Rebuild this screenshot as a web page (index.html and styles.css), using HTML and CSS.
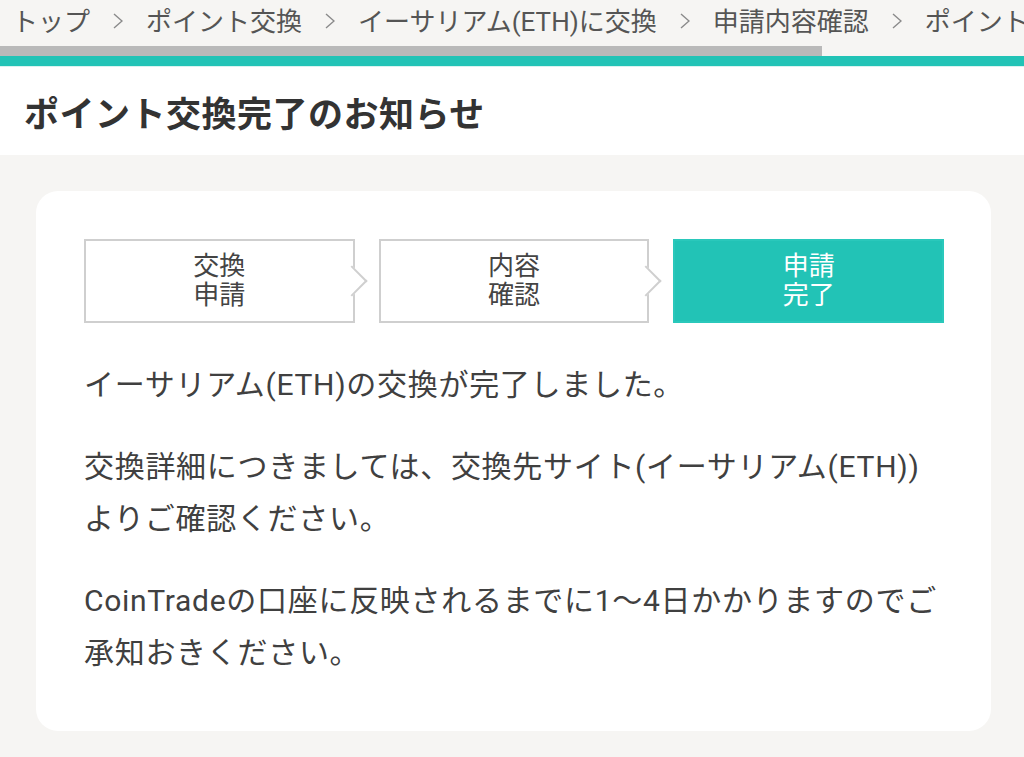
FILE: index.html
```html
<!DOCTYPE html>
<html lang="ja">
<head>
<meta charset="utf-8">
<title>ポイント交換完了のお知らせ</title>
<link rel="stylesheet" href="styles.css">
</head>
<body>
<nav class="crumbs">
  <div class="crumb-row">
    <span class="crumb">トップ</span>
    <svg class="sep" viewBox="0 0 10 16" width="10" height="16"><polyline points="1,1 9,8 1,15" fill="none" stroke="#8a8a8a" stroke-width="1.4"/></svg>
    <span class="crumb">ポイント交換</span>
    <svg class="sep" viewBox="0 0 10 16" width="10" height="16"><polyline points="1,1 9,8 1,15" fill="none" stroke="#8a8a8a" stroke-width="1.4"/></svg>
    <span class="crumb">イーサリアム(ETH)に交換</span>
    <svg class="sep" viewBox="0 0 10 16" width="10" height="16"><polyline points="1,1 9,8 1,15" fill="none" stroke="#8a8a8a" stroke-width="1.4"/></svg>
    <span class="crumb">申請内容確認</span>
    <svg class="sep" viewBox="0 0 10 16" width="10" height="16"><polyline points="1,1 9,8 1,15" fill="none" stroke="#8a8a8a" stroke-width="1.4"/></svg>
    <span class="crumb">ポイント交換完了のお知らせ</span>
  </div>
  <div class="scroll-track"><div class="scroll-thumb"></div></div>
</nav>
<div class="accent"></div>
<header class="page-head">
  <h1>ポイント交換完了のお知らせ</h1>
</header>
<main class="main">
  <section class="card">
    <ol class="steps">
      <li class="step arrow">交換<br>申請</li>
      <li class="step arrow">内容<br>確認</li>
      <li class="step current">申請<br>完了</li>
    </ol>
    <p class="msg">イーサリアム(ETH)の交換が完了しました。</p>
    <p class="msg">交換詳細につきましては、交換先サイト(イーサリアム(ETH))よりご確認ください。</p>
    <p class="msg">CoinTradeの口座に反映されるまでに1〜4日かかりますのでご承知おきください。</p>
  </section>
</main>
</body>
</html>
```

FILE: styles.css
```css
* { box-sizing: border-box; }
html, body { margin: 0; padding: 0; }
body {
  width: 1024px;
  height: 757px;
  overflow: hidden;
  background: #f6f5f3;
  font-family: Roboto, "Noto Sans CJK JP", sans-serif;
  color: #404040;
}
.crumbs {
  background: #f6f5f3;
}
.crumb-row {
  height: 46px;
  display: flex;
  align-items: center;
  white-space: nowrap;
  overflow: hidden;
  padding-left: 12px;
  padding-bottom: 7px;
  gap: 23px;
  font-size: 26px;
  color: #555;
}
.crumb { flex: none; }
.sep { flex: none; margin-top: 2px; }
.scroll-track {
  height: 10px;
  background: #f6f5f3;
}
.scroll-thumb {
  width: 822px;
  height: 10px;
  background: #b9b9b9;
}
.accent {
  height: 11px;
  background: #22c3b6;
  border-bottom: 1px solid #d8f3f0;
}
.page-head {
  background: #fff;
  height: 88px;
  display: flex;
  align-items: center;
  padding-left: 24px;
}
.page-head h1 {
  margin: 0;
  font-size: 35px;
  font-weight: 700;
  color: #333;
  letter-spacing: 0.5px;
}
.main {
  padding: 36px 33px 0 36px;
}
.card {
  background: #fff;
  border-radius: 22px;
  padding: 48px 47px 22px 48px;
}
.steps {
  list-style: none;
  margin: 0 0 36px;
  padding: 0;
  display: flex;
  gap: 24px;
}
.step {
  flex: 1;
  height: 84px;
  border: 2px solid #cfcfcf;
  background: #fff;
  display: flex;
  align-items: center;
  justify-content: center;
  text-align: center;
  font-size: 26px;
  line-height: 29px;
  color: #444;
  position: relative;
}
.step.arrow::after {
  content: "";
  position: absolute;
  right: -10px;
  top: 50%;
  width: 20px;
  height: 20px;
  background: #fff;
  border-top: 2px solid #cfcfcf;
  border-right: 2px solid #cfcfcf;
  transform: translateY(-50%) rotate(45deg);
}
.step.current {
  background: #22c3b6;
  border-color: #2ac8bb;
  color: #fff;
}
.msg {
  margin: 0 4px 30px 0;
  font-size: 30px;
  line-height: 52px;
  letter-spacing: 0.7px;
  color: #404040;
}
```
